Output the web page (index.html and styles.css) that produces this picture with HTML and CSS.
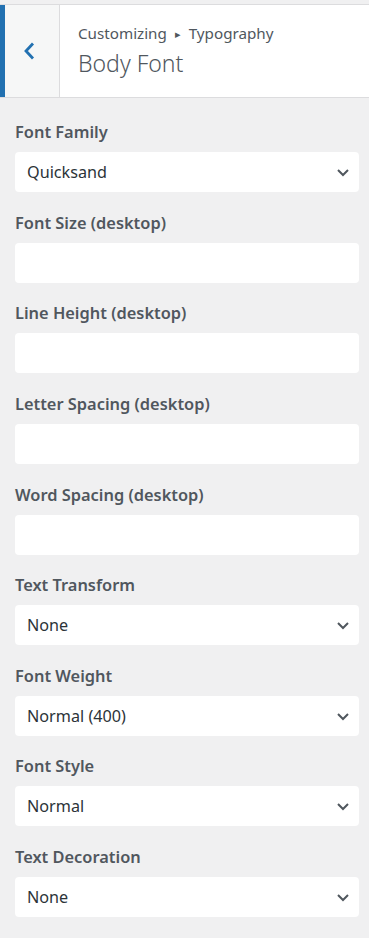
FILE: index.html
```html
<!DOCTYPE html>
<html>
<head>
	<meta charset="utf-8">
	<link rel="stylesheet" href="styles.css">
</head>
<body>
<header class="panel-head">
	<button class="back" type="button" aria-label="Back">
		<svg width="12" height="18" viewBox="0 0 12 18"><polyline points="10,1.5 3,9 10,16.5" fill="none" stroke="#2271b1" stroke-width="2.8"/></svg>
	</button>
	<div class="head-title">
		<span class="crumb">Customizing <span class="tri">&#9656;</span> Typography</span>
		<h1>Body Font</h1>
	</div>
</header>
<main class="controls">
	<div class="field">
		<label>Font Family</label>
		<div class="select">Quicksand</div>
	</div>
	<div class="field">
		<label>Font Size (desktop)</label>
		<div class="input"></div>
	</div>
	<div class="field">
		<label>Line Height (desktop)</label>
		<div class="input"></div>
	</div>
	<div class="field">
		<label>Letter Spacing (desktop)</label>
		<div class="input"></div>
	</div>
	<div class="field">
		<label>Word Spacing (desktop)</label>
		<div class="input"></div>
	</div>
	<div class="field">
		<label>Text Transform</label>
		<div class="select">None</div>
	</div>
	<div class="field">
		<label>Font Weight</label>
		<div class="select">Normal (400)</div>
	</div>
	<div class="field">
		<label>Font Style</label>
		<div class="select">Normal</div>
	</div>
	<div class="field">
		<label>Text Decoration</label>
		<div class="select">None</div>
	</div>
</main>
</body>
</html>
```

FILE: styles.css
```css
body { margin: 0; background: #f0f0f1; font-family: "Noto Sans", "Open Sans", sans-serif; color: #2c3338; }

.panel-head { display: flex; margin-top: 4px; height: 94px; background: #fff; border-top: 1px solid #dcdcde; border-bottom: 1px solid #dcdcde; box-sizing: border-box; }
.back { width: 60px; border: 0; border-left: 5px solid #2271b1; border-right: 1px solid #dcdcde; background: #f6f7f7; padding: 0 0 0 18px; display: flex; align-items: center; justify-content: flex-start; }
.head-title { padding: 18px 18px 0; }
.crumb { display: block; font-size: 15.2px; line-height: 20px; color: #50575e; }
.crumb .tri { font-size: 11px; position: relative; top: -1px; padding: 0 4px; }
.head-title h1 { margin: 3px 0 0; font-size: 23px; font-weight: 300; line-height: 30px; color: #50575e; }

.controls { padding: 22px 10px 21px 15px; }
.field { margin-bottom: 18.625px; }
.field:last-child { margin-bottom: 0; }
.field label { display: block; font-size: 16.4px; font-weight: 600; line-height: 24px; margin-bottom: 8px; color: #50575e; }
.input, .select { height: 40px; background: #fff; border-radius: 4px; box-sizing: border-box; }
.select { padding: 0 12px; font-size: 16.2px; line-height: 40px; color: #2c3338; background-image: url("data:image/svg+xml;utf8,<svg xmlns='http://www.w3.org/2000/svg' width='14' height='10' viewBox='0 0 14 10'><polyline points='2,3 7,8 12,3' fill='none' stroke='%2350575e' stroke-width='2'/></svg>"); background-repeat: no-repeat; background-position: right 9px center; }
```
